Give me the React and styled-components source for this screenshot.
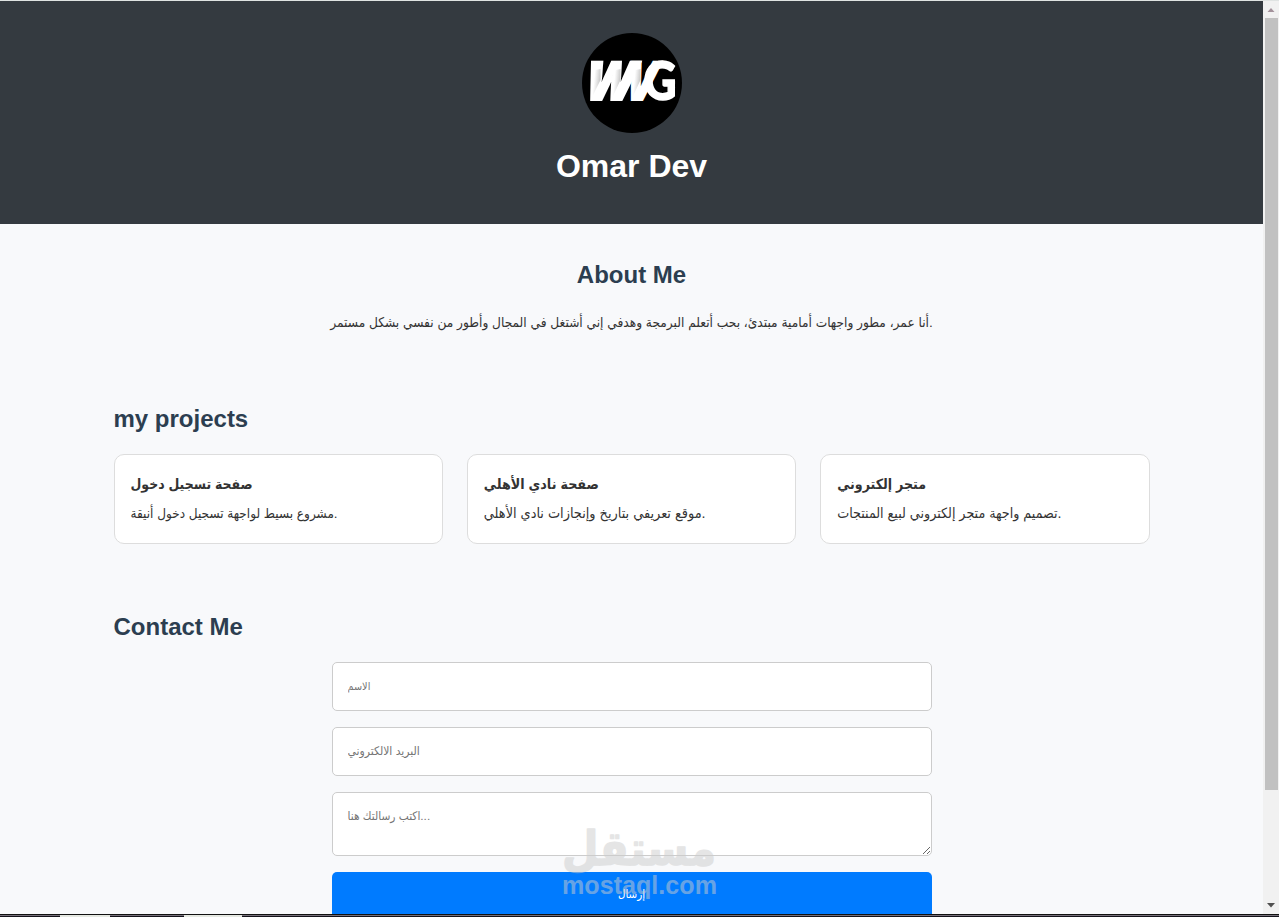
import React from 'react';
import styled, { createGlobalStyle } from 'styled-components';

const latin = '"Liberation Sans", Arial';
const arabic = '"Liberation Sans", "DejaVu Sans Condensed", "DejaVu Sans", sans-serif';

const GlobalStyle = createGlobalStyle`
  *, *::before, *::after { box-sizing: border-box; margin: 0; padding: 0; }
  body { background: #f8f9fa; color: #333; font-family: ${latin}, sans-serif; line-height: 1.6; overflow: hidden; }
`;

const Window = styled.div`
  position: relative;
  display: flex;
  flex-direction: column;
  height: 917px;
  overflow: hidden;
  border-top: 1px solid #dfe3e2;
`;
const Viewport = styled.div`
  display: flex;
  height: 913px;
`;
const Page = styled.main`
  flex: 1;
  min-width: 0;
  overflow: hidden;
  background: #f8f9fb;
`;
const Header = styled.header`
  display: flex;
  flex-direction: column;
  align-items: center;
  gap: 7.8px;
  height: 223px;
  padding: 32px;
  background: #343a40;
  color: #fff;
`;
const Avatar = styled.svg`
  flex: none;
  width: 100px;
  height: 100px;
  border-radius: 50%;
  background: #000;
`;
const Name = styled.h1`
  font-size: 32px;
  line-height: 51.2px;
`;
const Section = styled.section`
  max-width: 1100px;
  margin: 0 auto;
  padding: 32px;
  text-align: ${(p) => (p.$centered ? 'center' : 'left')};
`;
const Title = styled.h2`
  margin-bottom: 16px;
  font-size: 24px;
  line-height: 38.4px;
  color: #2c3e50;
`;
const Paragraph = styled.p`
  font: ${(p) => p.$size}px/25.6px ${arabic};
  height: 25.6px;
  white-space: nowrap;
`;
const Cards = styled.div`
  display: grid;
  grid-template-columns: repeat(3, 1fr);
  gap: 24px;
`;
const Card = styled.article`
  padding: 16px;
  border: 1px solid #ddd;
  border-radius: 10px;
  background: #fff;
`;
const CardTitle = styled.h3`
  height: 30px;
  font: bold ${(p) => p.$size}px/26px ${arabic};
  white-space: nowrap;
`;
const Form = styled.form`
  display: flex;
  flex-direction: column;
  gap: 16px;
  width: 600px;
  margin: 0 auto;
`;
const Field = styled.input`
  height: 49px;
  padding: 14px 15px 15px;
  border: 1px solid #ccc;
  border-radius: 5px;
  background: #fff;
  font: ${(p) => p.$size}px ${arabic};
  outline: none;
  &::placeholder { color: #757575; }
`;
const Message = styled(Field).attrs({ as: 'textarea' })`
  height: 64px;
  padding-top: 16px;
  overflow: hidden;
  resize: vertical;
`;
const Submit = styled.button`
  height: 47px;
  padding-bottom: 3px;
  border: 0;
  border-radius: 5px;
  background: #007bff;
  color: #fff;
  font: 11.5px ${arabic};
`;
const Scrollbar = styled.aside`
  display: flex;
  flex-direction: column;
  align-items: center;
  justify-content: space-between;
  width: 16px;
  background: #f1f1f1;
`;
const Arrow = styled.svg`
  width: 16px;
  height: 17px;
`;
const Thumb = styled.div`
  width: 13px;
  height: 772px;
  margin-bottom: auto;
  background: #c1c1c1;
`;
const Taskbar = styled.footer`
  display: flex;
  flex: none;
  height: 3px;
  padding-left: 60px;
  gap: 74px;
  border-top: 1px solid #111;
  background: linear-gradient(#77717b 1px, #14131b 1px);
`;
const Task = styled.i`
  width: ${(p) => p.$width}px;
  background: #e5e8e2;
`;
const Watermark = styled.svg`
  position: absolute;
  left: 558px;
  top: 820px;
  width: 164px;
  height: 84px;
  overflow: visible;
  pointer-events: none;
`;

const projects = [
  { title: 'صفحة تسجيل دخول', text: 'مشروع بسيط لواجهة تسجيل دخول أنيقة.', titleSize: 13.9, size: 13.45 },
  { title: 'صفحة نادي الأهلي', text: 'موقع تعريفي بتاريخ وإنجازات نادي الأهلي.', titleSize: 14.2, size: 14.35 },
  { title: 'متجر إلكتروني', text: 'تصميم واجهة متجر إلكتروني لبيع المنتجات.', titleSize: 14.1, size: 14.15 },
];

function Logo() {
  return (
    <Avatar viewBox="0 0 100 100">
      <defs>
        <linearGradient id="fold" x1="0" x2="1" y1="0.3" y2="0.6">
          <stop offset="0.3" stopColor="#999" stopOpacity="0" />
          <stop offset="1" stopColor="#888" stopOpacity="0.55" />
        </linearGradient>
      </defs>
      <g fill="#fff" stroke="#fff" strokeWidth="2" fontFamily="Inter, Liberation Sans, sans-serif" fontWeight="900" fontSize="52.5">
        <text transform="translate(-1 66.8) skewX(-14.5)" textLength="51" lengthAdjust="spacingAndGlyphs">W</text>
        <text transform="translate(39 66.8) skewX(-14.5)" textLength="32" lengthAdjust="spacingAndGlyphs">V</text>
        <text transform="translate(61.5 66.6)" fontFamily="Lato, Liberation Sans, sans-serif" fontSize="53" strokeWidth="1.5" textLength="33" lengthAdjust="spacingAndGlyphs">G</text>
      </g>
      <g fill="url(#fold)">
        <path d="M9 38 18.5 36V47L9 66z" />
        <path d="M29.5 38 38.5 36V47L29.5 66z" />
        <path d="M49.5 38 58.5 36V47L49.5 66z" />
      </g>
    </Avatar>
  );
}

export default function App() {
  return (
    <Window>
      <GlobalStyle />
      <Viewport>
        <Page>
          <Header>
            <Logo />
            <Name>Omar Dev</Name>
          </Header>
          <Section $centered>
            <Title>About Me</Title>
            <Paragraph $size={13.58}>أنا عمر، مطور واجهات أمامية مبتدئ، بحب أتعلم البرمجة وهدفي إني أشتغل في المجال وأطور من نفسي بشكل مستمر.</Paragraph>
          </Section>
          <Section>
            <Title>my projects</Title>
            <Cards>
              {projects.map((p) => (
                <Card key={p.title}>
                  <CardTitle $size={p.titleSize}>{p.title}</CardTitle>
                  <Paragraph $size={p.size}>{p.text}</Paragraph>
                </Card>
              ))}
            </Cards>
          </Section>
          <Section>
            <Title>Contact Me</Title>
            <Form>
              <Field $size={10.8} placeholder="الاسم" />
              <Field $size={12} placeholder="البريد الالكتروني" />
              <Message $size={11.8} placeholder="اكتب رسالتك هنا..." />
              <Submit type="button">إرسال</Submit>
            </Form>
          </Section>
        </Page>
        <Scrollbar>
          <Arrow viewBox="0 0 16 17"><path d="M4.5 11 8 7 11.5 11z" fill="#a3929b" /></Arrow>
          <Thumb />
          <Arrow viewBox="0 0 16 17"><path d="M4 6h8L8 10.5z" fill="#505050" /></Arrow>
        </Scrollbar>
      </Viewport>
      <Taskbar><Task $width={50} /><Task $width={58} /></Taskbar>
      <Watermark viewBox="0 0 164 84">
        <g fill="#ccc" opacity="0.5" fontWeight="bold">
          <text x="4" y="43.5" fontFamily="DejaVu Sans" fontSize="47" stroke="#ccc" strokeWidth="1.4" strokeLinejoin="round" textLength="154" lengthAdjust="spacingAndGlyphs">مستقل</text>
          <text x="4" y="73" fontFamily="Liberation Sans" fontSize="25" textLength="155" lengthAdjust="spacingAndGlyphs">mostaql.com</text>
        </g>
      </Watermark>
    </Window>
  );
}
